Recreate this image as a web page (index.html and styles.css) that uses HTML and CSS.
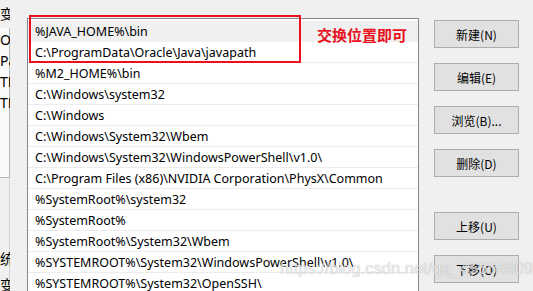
FILE: index.html
```html
<!DOCTYPE html>
<html>

<head>
	<meta charset="utf-8">
	<title>编辑环境变量</title>
	<meta name="viewport" content="width=device-width, initial-scale=1.0">
	<link rel="stylesheet" href="styles.css">
</head>

<body>
	<div class="window">
		<div class="side">
			<div class="side-label">变</div>
			<div class="side-panel">
				<div>Or</div>
				<div>Pa</div>
				<div>TE</div>
				<div>TM</div>
			</div>
			<div class="side-lower">
				<div class="side-label">统</div>
				<div class="side-label">变</div>
			</div>
		</div>

		<div class="list">
			<div class="row selected">%JAVA_HOME%\bin</div>
			<div class="row">C:\ProgramData\Oracle\Java\javapath</div>
			<div class="row">%M2_HOME%\bin</div>
			<div class="row">C:\Windows\system32</div>
			<div class="row">C:\Windows</div>
			<div class="row">C:\Windows\System32\Wbem</div>
			<div class="row">C:\Windows\System32\WindowsPowerShell\v1.0\</div>
			<div class="row">C:\Program Files (x86)\NVIDIA Corporation\PhysX\Common</div>
			<div class="row">%SystemRoot%\system32</div>
			<div class="row">%SystemRoot%</div>
			<div class="row">%SystemRoot%\System32\Wbem</div>
			<div class="row">%SYSTEMROOT%\System32\WindowsPowerShell\v1.0\</div>
			<div class="row">%SYSTEMROOT%\System32\OpenSSH\</div>
		</div>

		<div class="buttons">
			<button>新建(N)</button>
			<button>编辑(E)</button>
			<button>浏览(B)...</button>
			<button>删除(D)</button>
			<button class="spaced">上移(U)</button>
			<button>下移(O)</button>
		</div>

		<!-- annotation drawn over the screenshot -->
		<div class="mark"></div>
		<div class="mark-note">交换位置即可</div>
		<div class="watermark">https://blog.csdn.net/qq_45664909</div>
	</div>
</body>

</html>
```

FILE: styles.css
```css
:root {
	--bg: #f0f0f0;
	--line: #828790;
	--row-line: #ececec;
	--btn: #e1e1e1;
	--btn-border: #adadad;
	--red: #e8111d;
}

body {
	margin: 0;
	background: var(--bg);
	color: #000;
	font: 12.5px/1 "Noto Sans", "Noto Sans CJK SC", sans-serif;
	overflow: hidden;
}

.window {
	position: relative;
	display: flex;
	align-items: flex-start;
	width: 533px;
	height: 291px;
	overflow: hidden;
}

.side {
	width: 10px;
	flex: none;
	overflow: hidden;
	white-space: nowrap;
	font-size: 14px;
}

.side-label {
	height: 28px;
	line-height: 28px;
}

.side-panel {
	background: #fafafa;
	border-right: 1px solid #b9b9b9;
	border-bottom: 1px solid #b9b9b9;
	height: 148px;
	padding-top: 1px;
}

.side-panel div {
	height: 21px;
	line-height: 21px;
}

.side-lower {
	padding-top: 67px;
	border-right: 1px solid #d4d4d4;
}

.side-lower .side-label {
	height: 26px;
}

.list {
	flex: none;
	width: 390px;
	height: 300px;
	margin: 18px 0 0 17px;
	padding-top: 2px;
	background: #fff;
	border: 1px solid var(--line);
	border-bottom: none;
}

.row {
	height: 20px;
	line-height: 21px;
	padding-left: 7px;
	border-bottom: 1px solid var(--row-line);
	white-space: nowrap;
	overflow: hidden;
}

.row.selected {
	background: var(--bg);
	border-bottom-color: var(--bg);
}

.buttons {
	display: flex;
	flex-direction: column;
	gap: 15px;
	margin: 20px 0 0 15px;
}

button {
	width: 85px;
	height: 28px;
	padding: 0;
	background: var(--btn);
	border: 1px solid var(--btn-border);
	border-radius: 0;
	color: #000;
	font: 12px "Noto Sans CJK SC", sans-serif;
}

button.spaced {
	margin-top: 20px;
}

.mark {
	position: absolute;
	left: 29px;
	top: 15px;
	width: 268px;
	height: 44px;
	border: 2px solid var(--red);
}

.mark-note {
	position: absolute;
	left: 317px;
	top: 26px;
	color: var(--red);
	font: bold 15px/18px "Noto Sans CJK SC", sans-serif;
}

.watermark {
	position: absolute;
	left: 280px;
	top: 258px;
	color: rgba(255, 255, 255, 0.75);
	font: 16.5px/20px "Liberation Sans", sans-serif;
	text-shadow: 0 0 1px rgba(0, 0, 0, 0.35);
	white-space: nowrap;
}
```
